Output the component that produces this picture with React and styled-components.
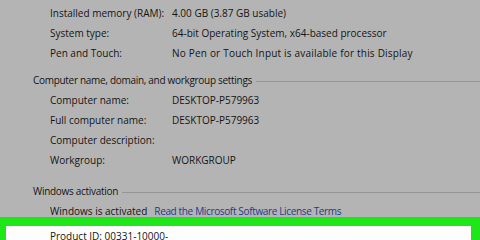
import React from "react";
import styled, { createGlobalStyle } from "styled-components";

const Global = createGlobalStyle`
  html, body {
    margin: 0;
    padding: 0;
    background: #b4b4b4;
    overflow: hidden;
  }
  body {
    font-family: "Open Sans", "Noto Sans", sans-serif;
    font-size: 10px;
    color: #151515;
  }
`

const Page = styled.div`
  width: 480px;
  height: 240px;
  overflow: hidden;
  padding-top: 3px;
  box-sizing: border-box;
`

const Row = styled.div`
  display: flex;
  height: ${p => p.h || 20}px;
  line-height: ${p => p.h || 20}px;
  padding-left: 50px;
  white-space: nowrap;
`

const Label = styled.div`
  width: 122px;
  flex: none;
`

const Value = styled.div`
  flex: none;
  letter-spacing: ${p => p.wide ? "0.2px" : "0"};
`

const Link = styled.span`
  color: #1d3b8c;
  margin-left: 7px;
  letter-spacing: -0.35px;
`

const Section = styled.div`
  display: flex;
  align-items: center;
  height: 20px;
  margin-top: ${p => p.top || 0}px;
  padding-left: 33px;
  white-space: nowrap;
  letter-spacing: -0.3px;
  &:after {
    content: "";
    flex: 1;
    height: 1px;
    background: #959595;
    margin-left: 4px;
    margin-top: 2px;
  }
`

const Highlight = styled.div`
  margin-top: -5px;
  border: 9px solid #1ee619;
  border-left-width: 6px;
  border-right-width: 9px;
  background: #fdfdfd;
  height: 40px;
  padding-left: 44px;
  padding-top: 1px;
  line-height: 18px;
  white-space: nowrap;
`

const systemRows = [
  ["Installed memory (RAM):", "4.00 GB (3.87 GB usable)"],
  ["System type:", "64-bit Operating System, x64-based processor"],
  ["Pen and Touch:", "No Pen or Touch Input is available for this Display", true],
]

const nameRows = [
  ["Computer name:", "DESKTOP-P579963"],
  ["Full computer name:", "DESKTOP-P579963"],
  ["Computer description:", ""],
  ["Workgroup:", "WORKGROUP"],
]

export default function App() {
  return (
    <Page>
      <Global />
      {systemRows.map(([l, v, wide]) => (
        <Row key={l}>
          <Label>{l}</Label>
          <Value wide={wide}>{v}</Value>
        </Row>
      ))}
      <Section top={7}>Computer name, domain, and workgroup settings</Section>
      {nameRows.map(([l, v]) => (
        <Row key={l}>
          <Label>{l}</Label>
          <Value>{v}</Value>
        </Row>
      ))}
      <Section top={11}>Windows activation</Section>
      <Row h={21}>
        Windows is activated
        <Link>Read the Microsoft Software License Terms</Link>
      </Row>
      <Highlight>Product ID: 00331-10000-</Highlight>
    </Page>
  )
}
